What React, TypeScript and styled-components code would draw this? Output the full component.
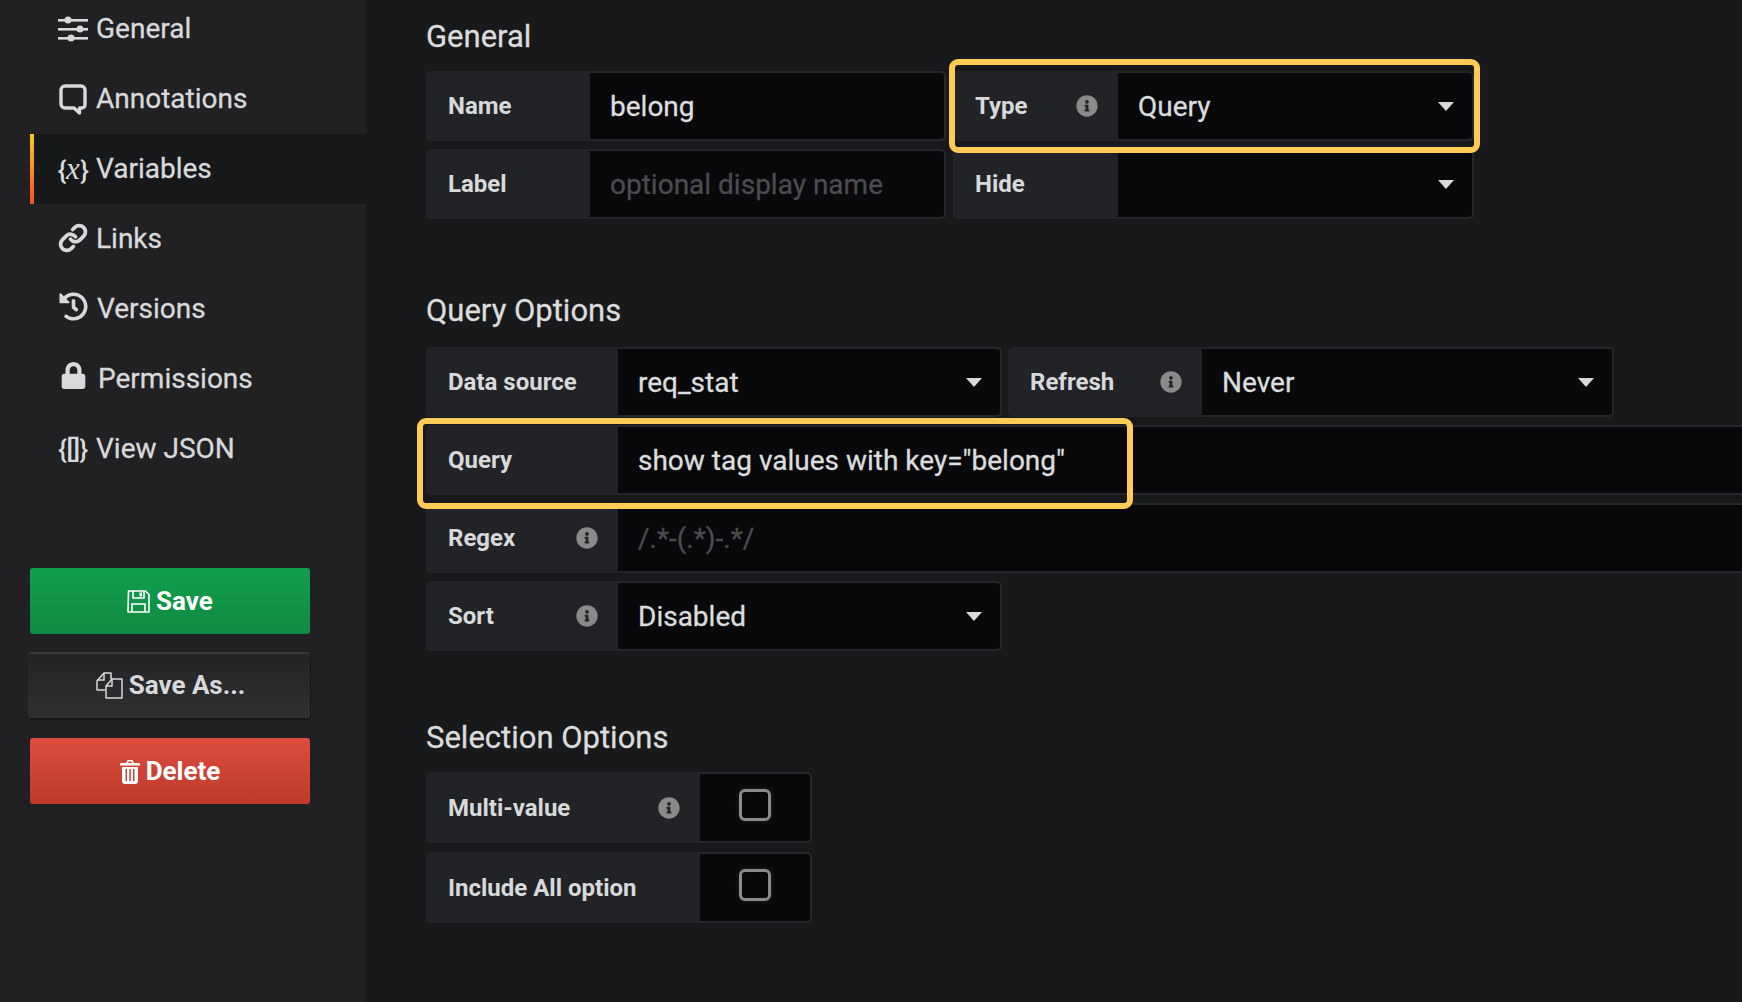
import { FC, ReactNode } from "react";
import styled, { createGlobalStyle } from "styled-components";
import { FaHistory, FaInfoCircle, FaLock } from "react-icons/fa";
import { LuLink } from "react-icons/lu";

const GlobalStyle = createGlobalStyle`
  html, body {
    margin: 0;
    height: 100%;
    overflow: hidden;
    background: #18191b;
    font-family: Roboto, "Liberation Sans", sans-serif;
  }
`;

const TextGlyph = styled.span`
  font-size: 26px;
  font-weight: 500;
  line-height: 30px;
  white-space: nowrap;
  letter-spacing: -0.5px;

  em {
    font-family: "Liberation Serif", serif;
    font-size: 31px;
    font-weight: 400;
    margin: 0 1px 0 0;
  }
`;

const SlidersIcon = () => (
  <svg width="30" height="26" viewBox="0 0 30 26" fill="#d8d9da">
    <rect y="3" width="30" height="2.6" />
    <rect y="12" width="30" height="2.6" />
    <rect y="21" width="30" height="2.6" />
    <circle cx="10" cy="4" r="3.5" />
    <circle cx="22" cy="13" r="3.5" />
    <circle cx="13" cy="22" r="3.5" />
  </svg>
);

const CommentIcon = () => (
  <svg width="28" height="31" viewBox="0 0 28 31" fill="none">
    <path
      d="M6 2h16a4 4 0 0 1 4 4v15a3 3 0 0 1-3 3h-2.500v5L15 24H6a4 4 0 0 1-4-4V6a4 4 0 0 1 4-4z"
      stroke="#d8d9da"
      strokeWidth="3.4"
      strokeLinejoin="round"
    />
  </svg>
);

const FloppyIcon = () => (
  <svg width="23" height="23" viewBox="0 0 23 23" fill="none" stroke="#fff" strokeWidth="1.6">
    <path d="M1.500 1h17l3.500 3.500V22H1z" strokeLinejoin="round" />
    <path d="M6 1v7h11V1M5 22v-8h13v8" />
    <rect x="12.500" y="2.500" width="2.500" height="4" fill="#fff" stroke="none" />
  </svg>
);

const CopyIcon = () => (
  <svg width="27" height="27" viewBox="0 0 27 27" fill="none" stroke="#d8d9da" strokeWidth="1.5">
    <path d="M9 18H1V9l7-8h7v6" strokeLinejoin="round" />
    <path d="M10 26V14l6-7h10v19z" strokeLinejoin="round" />
    <path d="M8 1v7H1M16 7v7h-6" />
  </svg>
);

const TrashIcon = () => (
  <svg width="20" height="25" viewBox="0 0 20 25">
    <path
      fillRule="evenodd"
      fill="#fff"
      d="M1 4h5l1.500-3h5L14 4h5a1 1 0 0 1 1 1v1.500H0V5a1 1 0 0 1 1-1zM8.500 2.600 8 4h4l-.500-1.400zM2 8h16v14a3 3 0 0 1-3 3H5a3 3 0 0 1-3-3zM5.500 10v12H7V10zM9.300 10v12h1.500V10zM13 10v12h1.500V10z"
    />
  </svg>
);

type NavEntry = {
  label: string;
  icon: ReactNode;
  active?: boolean;
  textGap?: number;
  lift?: number;
};

const navEntries: NavEntry[] = [
  { label: "General", icon: <SlidersIcon /> },
  { label: "Annotations", icon: <CommentIcon /> },
  {
    label: "Variables",
    active: true,
    icon: (
      <TextGlyph>
        {"{"}
        <em>x</em>
        {"}"}
      </TextGlyph>
    ),
  },
  { label: "Links", icon: <LuLink size={32} strokeWidth={3} color="#d8d9da" />, lift: 2 },
  { label: "Versions", icon: <FaHistory size={29} color="#d8d9da" />, textGap: 9, lift: 6 },
  { label: "Permissions", icon: <FaLock size={27} color="#d8d9da" />, textGap: 10, lift: 8 },
  { label: "View JSON", icon: <TextGlyph>{"{[]}"}</TextGlyph> },
];

const Info = () => (
  <InfoMark>
    <FaInfoCircle size={22} />
  </InfoMark>
);

const Settings: FC = () => (
  <Page>
    <GlobalStyle />
    <Sidebar>
      <NavList>
        {navEntries.map(({ label, icon, active, textGap, lift }) => (
          <NavItem key={label} $active={active}>
            <NavIcon $lift={lift}>{icon}</NavIcon>
            <NavLabel $gap={textGap}>{label}</NavLabel>
          </NavItem>
        ))}
      </NavList>
      <Actions>
        <ActionButton $kind="save">
          <FloppyIcon /> Save
        </ActionButton>
        <ActionButton $kind="saveAs">
          <CopyIcon /> Save As...
        </ActionButton>
        <ActionButton $kind="delete">
          <TrashIcon /> Delete
        </ActionButton>
      </Actions>
    </Sidebar>

    <Main>
      <Heading>General</Heading>
      <FormGroup>
        <FormRow>
          <Field $width={520}>
            <FieldLabel $width={166}>Name</FieldLabel>
            <InputValue>belong</InputValue>
          </Field>
          <Field $width={521}>
            <FieldLabel $width={167}>
              Type <Info />
            </FieldLabel>
            <InputValue>
              Query <Caret />
            </InputValue>
            <Highlight $top={-14} $left={-6} $right={-8} $bottom={-14} />
          </Field>
        </FormRow>
        <FormRow>
          <Field $width={520}>
            <FieldLabel $width={166}>Label</FieldLabel>
            <InputValue $muted>optional display name</InputValue>
          </Field>
          <Field $width={521}>
            <FieldLabel $width={167}>Hide</FieldLabel>
            <InputValue>
              <Caret />
            </InputValue>
          </Field>
        </FormRow>
      </FormGroup>

      <Heading $top={75} $bottom={19}>Query Options</Heading>
      <FormGroup>
        <FormRow $gap={6}>
          <Field $width={576}>
            <FieldLabel $width={194}>Data source</FieldLabel>
            <InputValue>
              req_stat <Caret />
            </InputValue>
          </Field>
          <Field $width={606}>
            <FieldLabel $width={196}>
              Refresh <Info />
            </FieldLabel>
            <InputValue>
              Never <Caret />
            </InputValue>
          </Field>
        </FormRow>
        <FormRow>
          <Field $grow>
            <FieldLabel $width={194}>Query</FieldLabel>
            <InputValue>show tag values with key="belong"</InputValue>
            <Highlight $top={-9} $left={-11} $width={716} $bottom={-16} />
          </Field>
        </FormRow>
        <FormRow>
          <Field $grow>
            <FieldLabel $width={194}>
              Regex <Info />
            </FieldLabel>
            <InputValue $muted>/.*-(.*)-.*/</InputValue>
          </Field>
        </FormRow>
        <FormRow>
          <Field $width={576}>
            <FieldLabel $width={194}>
              Sort <Info />
            </FieldLabel>
            <InputValue>
              Disabled <Caret />
            </InputValue>
          </Field>
        </FormRow>
      </FormGroup>

      <Heading $top={70}>Selection Options</Heading>
      <FormGroup $gap={9}>
        <FormRow>
          <Field $width={386} $height={71}>
            <FieldLabel $width={276}>
              Multi-value <Info />
            </FieldLabel>
            <CheckCell>
              <CheckBox />
            </CheckCell>
          </Field>
        </FormRow>
        <FormRow>
          <Field $width={386} $height={71}>
            <FieldLabel $width={276}>Include All option</FieldLabel>
            <CheckCell>
              <CheckBox />
            </CheckCell>
          </Field>
        </FormRow>
      </FormGroup>
    </Main>
  </Page>
);

const Page = styled.div`
  display: flex;
  width: 1742px;
  height: 1002px;
  overflow: hidden;
  background: #18191b;
  color: #d8d9da;
`;

const Sidebar = styled.aside`
  flex: 0 0 366px;
  box-sizing: border-box;
  padding-left: 30px;
  background: #212124;
`;

const NavList = styled.nav`
  display: flex;
  flex-direction: column;
  margin-top: -6px;
`;

const NavItem = styled.div<{ $active?: boolean }>`
  display: flex;
  align-items: center;
  height: 70px;
  box-sizing: border-box;
  padding-left: 28px;
  ${({ $active }) =>
    $active &&
    `
    background: #17181a;
    border-left: 4px solid;
    padding-left: 24px;
    border-image: linear-gradient(to bottom, #ffc81f, #f4501c) 1;
  `}
`;

const NavIcon = styled.span<{ $lift?: number }>`
  display: flex;
  flex: 0 0 30px;
  min-width: 0;
  align-items: center;
  justify-content: center;
  height: 32px;
  margin-bottom: ${({ $lift }) => $lift ?? 0}px;
`;

const NavLabel = styled.span<{ $gap?: number }>`
  margin-left: ${({ $gap }) => $gap ?? 8}px;
  font-size: 28px;
  line-height: 34px;
  color: #d8d9da;
  -webkit-text-stroke: 0.3px #d8d9da;
`;

const Actions = styled.div`
  display: flex;
  flex-direction: column;
  align-items: flex-start;
  margin-top: 84px;
`;

const buttonSkins = {
  save: "background: linear-gradient(to bottom, #129f4d, #0f8a42); color: #fff; margin-bottom: 18px;",
  saveAs:
    "background: linear-gradient(to bottom, #242427, #303033); color: #d8d9da; width: 282px; margin: 0 0 20px -2px; padding: 0 0 2px 3px; border-top: 2px solid #38383b; box-shadow: 1px 2px 0 #161618;",
  delete: "background: linear-gradient(to bottom, #dc4c3f, #bd3a2b); color: #fff;",
};

const ActionButton = styled.button<{ $kind: keyof typeof buttonSkins }>`
  display: flex;
  align-items: center;
  justify-content: center;
  gap: 6px;
  width: 280px;
  height: 66px;
  box-sizing: border-box;
  padding: 0;
  border: 0;
  border-radius: 3px;
  font-family: inherit;
  font-size: 26px;
  font-weight: 700;
  ${({ $kind }) => buttonSkins[$kind]}
`;

const Main = styled.main`
  flex: 1;
  min-width: 0;
  padding-left: 60px;
  overflow: hidden;
`;

const Heading = styled.h2<{ $top?: number; $bottom?: number }>`
  margin: ${({ $top }) => $top ?? 20}px 0 ${({ $bottom }) => $bottom ?? 17}px;
  font-size: 31px;
  font-weight: 400;
  line-height: 34px;
  color: #dcdcdd;
  -webkit-text-stroke: 0.3px #dcdcdd;
`;

const FormGroup = styled.div<{ $gap?: number }>`
  display: flex;
  flex-direction: column;
  gap: ${({ $gap }) => $gap ?? 8}px;
`;

const FormRow = styled.div<{ $gap?: number }>`
  display: flex;
  gap: ${({ $gap }) => $gap ?? 7}px;
`;

const Field = styled.div<{ $width?: number; $height?: number; $grow?: boolean }>`
  position: relative;
  display: flex;
  height: ${({ $height }) => $height ?? 70}px;
  box-sizing: border-box;
  ${({ $width }) => $width && `flex: 0 0 ${$width}px;`}
  ${({ $grow }) => $grow && "flex: 1; margin-right: -12px;"}
  border: 2px solid #26272a;
  border-radius: 5px;
  background: #09090b;
`;

const FieldLabel = styled.label<{ $width: number }>`
  display: flex;
  align-items: center;
  justify-content: space-between;
  flex: 0 0 ${({ $width }) => $width - 2}px;
  box-sizing: border-box;
  padding: 0 20px 0 22px;
  margin: -2px 0 -2px -2px;
  border-radius: 5px 0 0 5px;
  background: #222327;
  font-size: 24px;
  font-weight: 700;
  color: #d8d9da;
`;

const InfoMark = styled.span`
  display: flex;
  color: #8a8a8b;
`;

const InputValue = styled.div<{ $muted?: boolean }>`
  display: flex;
  align-items: center;
  justify-content: space-between;
  flex: 1;
  min-width: 0;
  padding: 0 18px 0 20px;
  font-size: 28px;
  color: ${({ $muted }) => ($muted ? "#4b4c4e" : "#dcddde")};
  -webkit-text-stroke: 0.3px ${({ $muted }) => ($muted ? "#4b4c4e" : "#dcddde")};
`;

const Caret = styled.span`
  width: 0;
  height: 0;
  margin-left: auto;
  border-top: 9px solid #d8d9da;
  border-left: 8px solid transparent;
  border-right: 8px solid transparent;
`;

const CheckCell = styled.div`
  display: flex;
  flex: 1;
  align-items: center;
  justify-content: center;
`;

const CheckBox = styled.span`
  width: 32px;
  height: 32px;
  margin-bottom: 6px;
  box-sizing: border-box;
  border: 3px solid #8b8b8c;
  border-radius: 6px;
  box-shadow: 0 0 4px rgba(255, 255, 255, 0.15);
`;

const Highlight = styled.span<{
  $top: number;
  $left: number;
  $bottom: number;
  $right?: number;
  $width?: number;
}>`
  position: absolute;
  z-index: 1;
  top: ${({ $top }) => $top}px;
  left: ${({ $left }) => $left}px;
  bottom: ${({ $bottom }) => $bottom}px;
  ${({ $right }) => $right !== undefined && `right: ${$right}px;`}
  ${({ $width }) => $width !== undefined && `width: ${$width}px;`}
  box-sizing: border-box;
  border: 6px solid #fecb57;
  border-radius: 9px;
  pointer-events: none;
`;

export default Settings;
